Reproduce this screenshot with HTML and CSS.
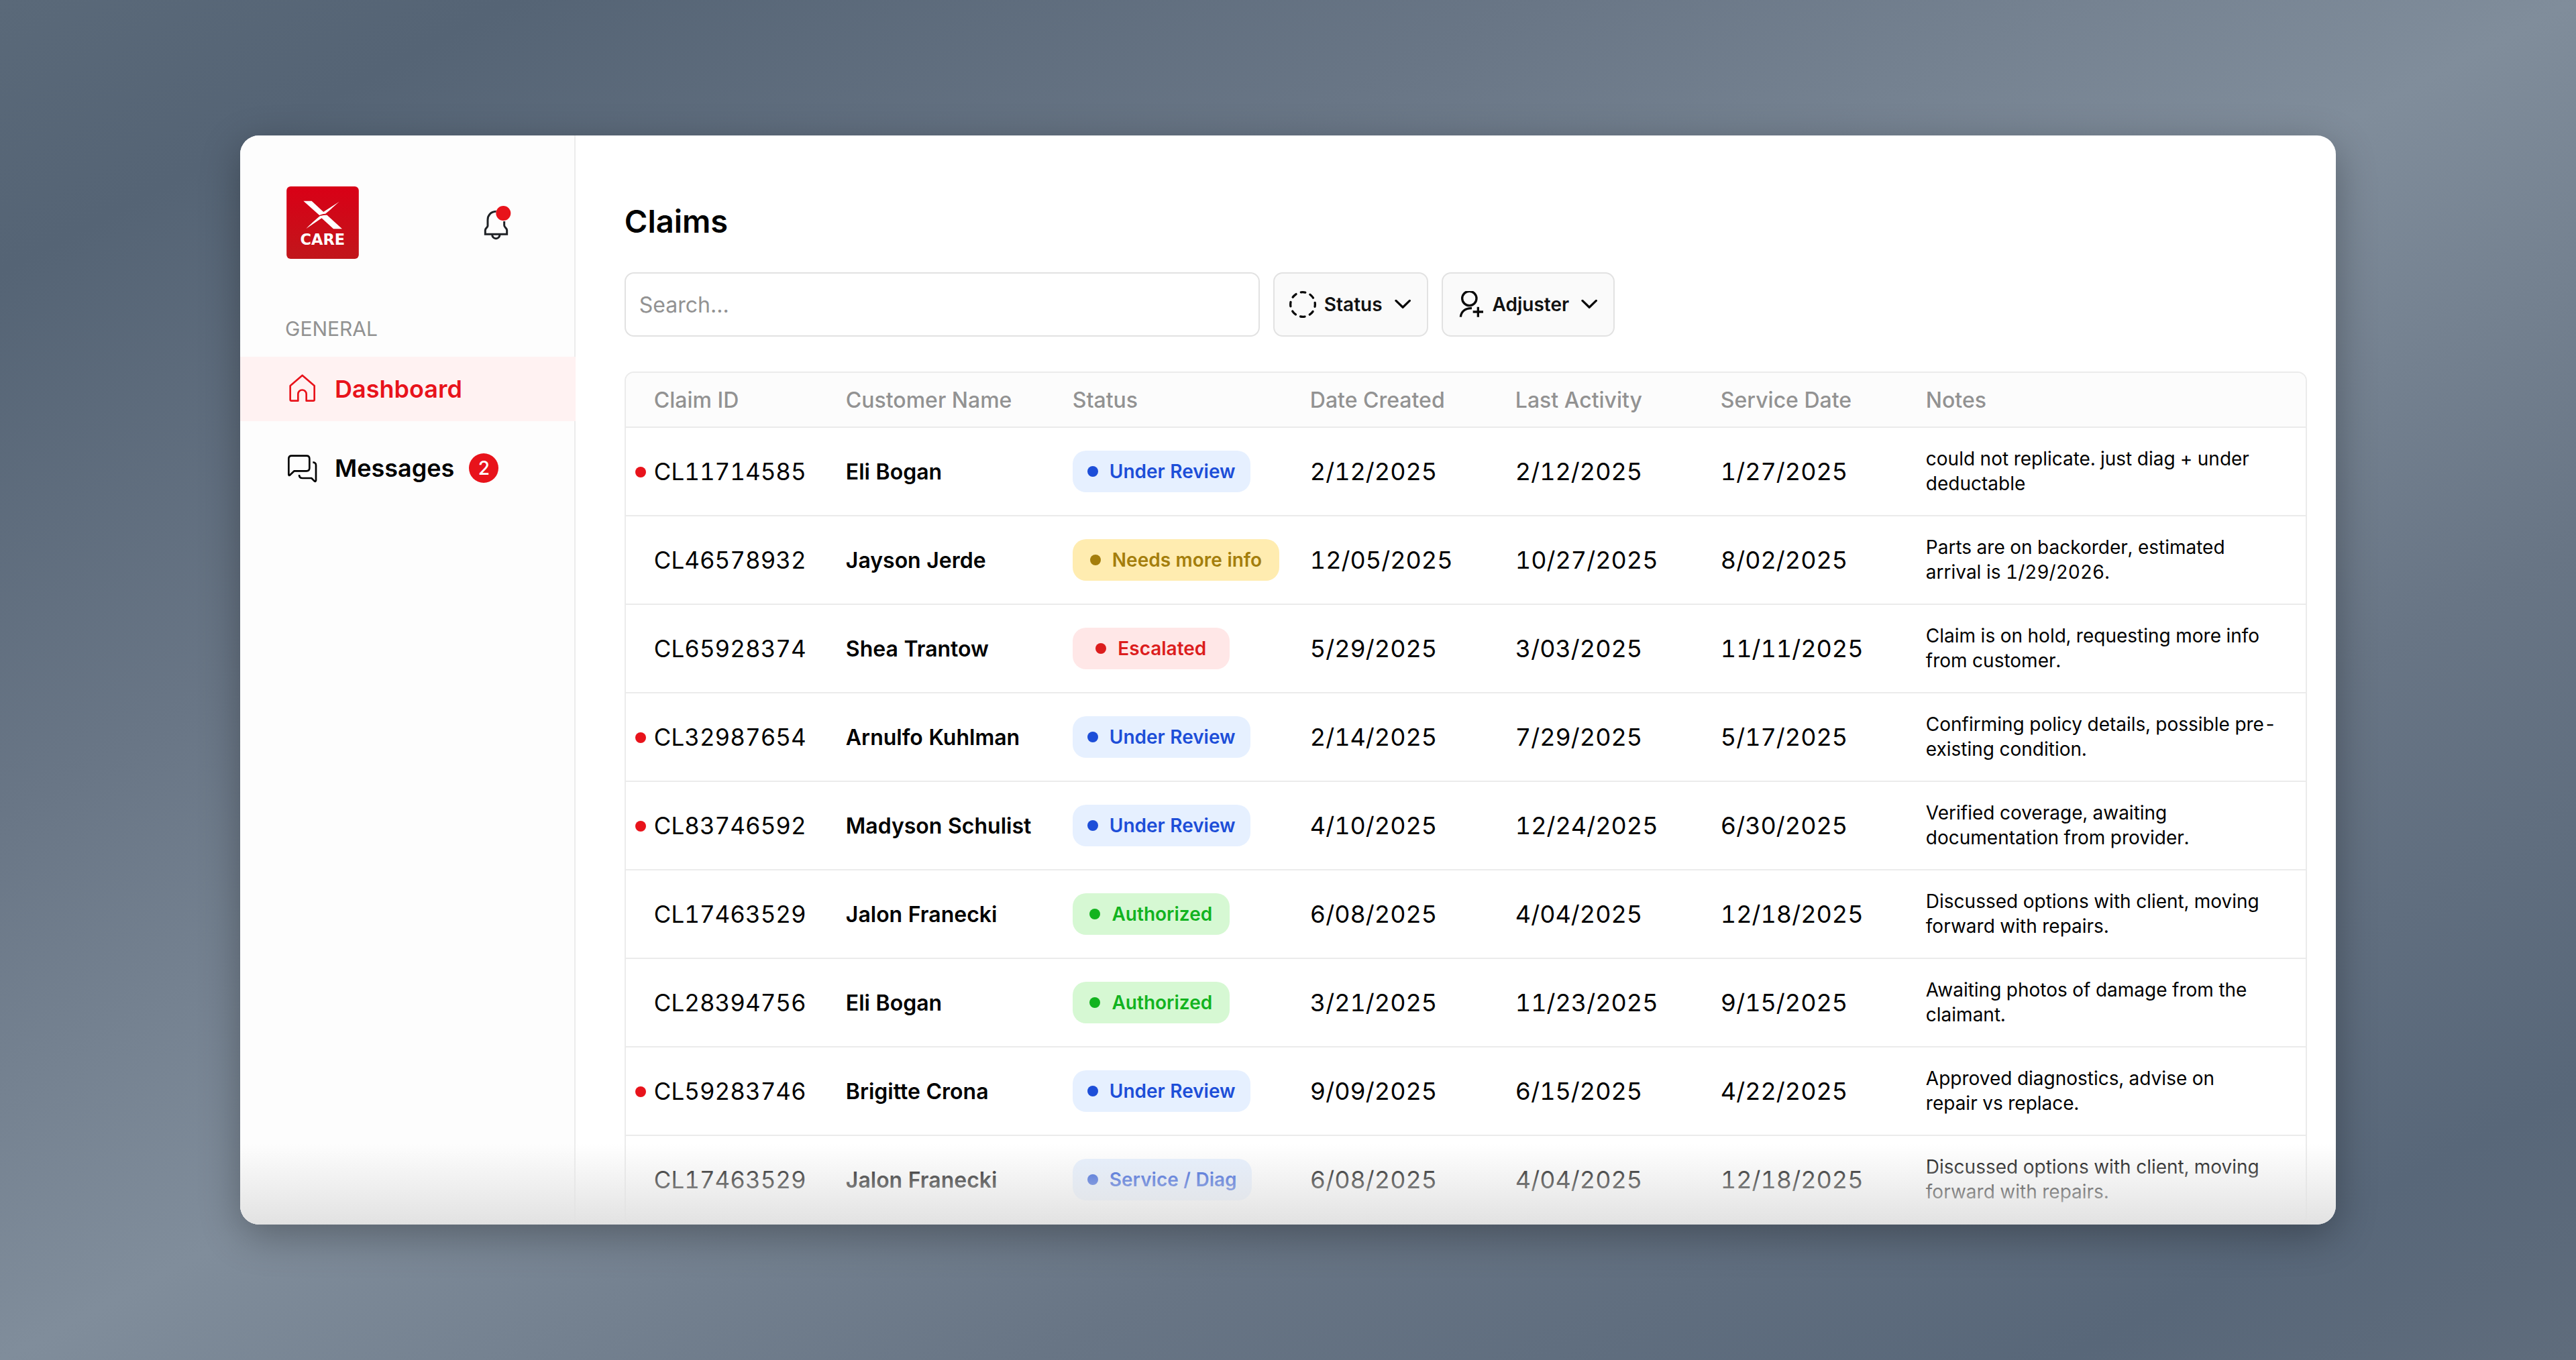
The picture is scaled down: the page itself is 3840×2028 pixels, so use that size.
FILE: index.html
```html
<!DOCTYPE html>
<html lang="en">
<head>
    <meta charset="UTF-8">
    <meta name="viewport" content="width=device-width, initial-scale=1.0">
    <title>Claims</title>
    <link rel="stylesheet" href="styles.css">
</head>
<body>

<div class="window">
    <aside class="sidebar">
        <div class="sidebar-top">
            <svg class="logo" viewBox="81 54 325 326" role="img" aria-label="X Care">
                <defs>
                    <linearGradient id="logo-bg" x1="0" y1="0" x2="0" y2="1">
                        <stop offset="0" stop-color="#d90016"/>
                        <stop offset="1" stop-color="#c1161b"/>
                    </linearGradient>
                </defs>
                <rect x="81" y="54" width="325" height="326" rx="18" fill="url(#logo-bg)"/>
                <path fill="#fff" d="M157 120H194L247 169L318 123C290 148 264 172 256 177C246 178 236 180 229 184Z"/>
                <path fill="#fff" d="M331 245H292L239 197L169 244C185 228 215 200 232 187C242 184 254 183 263 183Z"/>
                <text class="logo-text" x="243" y="317" text-anchor="middle">CARE</text>
            </svg>
            <button class="bell" type="button" aria-label="Notifications">
                <svg viewBox="84 78 144 156" fill="none" stroke="#1f2226" stroke-width="9">
                    <path d="M149 106C124 107 111 124 111 144V170C111 178 100 180 100 190V208H197V190C197 180 185 178 185 168V150"/>
                    <path d="M131 210A17 17 0 0 0 165 210"/>
                    <circle cx="181" cy="114" r="33" fill="#e8131b" stroke="none"/>
                </svg>
            </button>
        </div>

        <h2 class="nav-title">GENERAL</h2>
        <nav class="nav">
            <a class="nav-item active" href="#">
                <svg class="nav-icon" viewBox="27 54 132 132">
                    <path d="M92 59L38 106V168Q38 173 43 173H73V143A18 18 0 0 1 110 143V173H141Q146 173 146 168V106Z"/>
                </svg>
                Dashboard
            </a>
            <a class="nav-item" href="#">
                <svg class="nav-icon" viewBox="27 405 132 132">
                    <path d="M44 416H111Q124 416 124 429V471Q124 484 111 484H56L37 502Q31 506 31 499V429Q31 416 44 416Z"/>
                    <path d="M139 445Q153 446 153 458V526Q152 533 146 529L133 516H93Q78 516 78 501"/>
                </svg>
                Messages
                <span class="nav-count">2</span>
            </a>
        </nav>
    </aside>

    <main class="main">
        <h1>Claims</h1>

        <div class="filters">
            <input class="search" type="text" placeholder="Search..." aria-label="Search claims">
            <button class="filter" type="button">
                <svg class="icon-status" viewBox="95 113 120 120">
                    <circle cx="155" cy="173" r="55" stroke-dasharray="20 23.2" stroke-dashoffset="10"/>
                </svg>
                Status
                <svg class="icon-chevron" viewBox="567 150 73 48"><path d="M573 157L604 187L635 157"/></svg>
            </button>
            <button class="filter" type="button">
                <svg class="icon-adjuster" viewBox="860 113 116 120">
                    <circle cx="910" cy="146" r="32"/>
                    <path d="M871 229C873 205 892 189 921 190M949 184V229M926 206H972"/>
                </svg>
                Adjuster
                <svg class="icon-chevron" viewBox="567 150 73 48"><path d="M573 157L604 187L635 157"/></svg>
            </button>
        </div>

        <div class="table-box">
            <table class="claims">
                <thead>
                    <tr>
                        <th class="col-id">Claim ID</th>
                        <th class="col-name">Customer Name</th>
                        <th class="col-status">Status</th>
                        <th class="col-date">Date Created</th>
                        <th class="col-date">Last Activity</th>
                        <th class="col-date">Service Date</th>
                        <th>Notes</th>
                    </tr>
                </thead>
                <tbody>
                    <tr>
                        <td class="id unread">CL11714585</td>
                        <td class="name">Eli Bogan</td>
                        <td><span class="pill review">Under Review</span></td>
                        <td>2/12/2025</td>
                        <td>2/12/2025</td>
                        <td>1/27/2025</td>
                        <td class="notes">could not replicate. just diag + under deductable</td>
                    </tr>
                    <tr>
                        <td class="id">CL46578932</td>
                        <td class="name">Jayson Jerde</td>
                        <td><span class="pill info">Needs more info</span></td>
                        <td>12/05/2025</td>
                        <td>10/27/2025</td>
                        <td>8/02/2025</td>
                        <td class="notes">Parts are on backorder, estimated arrival is 1/29/2026.</td>
                    </tr>
                    <tr>
                        <td class="id">CL65928374</td>
                        <td class="name">Shea Trantow</td>
                        <td><span class="pill escalated">Escalated</span></td>
                        <td>5/29/2025</td>
                        <td>3/03/2025</td>
                        <td>11/11/2025</td>
                        <td class="notes">Claim is on hold, requesting more info from customer.</td>
                    </tr>
                    <tr>
                        <td class="id unread">CL32987654</td>
                        <td class="name">Arnulfo Kuhlman</td>
                        <td><span class="pill review">Under Review</span></td>
                        <td>2/14/2025</td>
                        <td>7/29/2025</td>
                        <td>5/17/2025</td>
                        <td class="notes">Confirming policy details, possible pre-existing condition.</td>
                    </tr>
                    <tr>
                        <td class="id unread">CL83746592</td>
                        <td class="name">Madyson Schulist</td>
                        <td><span class="pill review">Under Review</span></td>
                        <td>4/10/2025</td>
                        <td>12/24/2025</td>
                        <td>6/30/2025</td>
                        <td class="notes">Verified coverage, awaiting documentation from provider.</td>
                    </tr>
                    <tr>
                        <td class="id">CL17463529</td>
                        <td class="name">Jalon Franecki</td>
                        <td><span class="pill authorized">Authorized</span></td>
                        <td>6/08/2025</td>
                        <td>4/04/2025</td>
                        <td>12/18/2025</td>
                        <td class="notes">Discussed options with client, moving forward with repairs.</td>
                    </tr>
                    <tr>
                        <td class="id">CL28394756</td>
                        <td class="name">Eli Bogan</td>
                        <td><span class="pill authorized">Authorized</span></td>
                        <td>3/21/2025</td>
                        <td>11/23/2025</td>
                        <td>9/15/2025</td>
                        <td class="notes">Awaiting photos of damage from the claimant.</td>
                    </tr>
                    <tr>
                        <td class="id unread">CL59283746</td>
                        <td class="name">Brigitte Crona</td>
                        <td><span class="pill review">Under Review</span></td>
                        <td>9/09/2025</td>
                        <td>6/15/2025</td>
                        <td>4/22/2025</td>
                        <td class="notes">Approved diagnostics, advise on repair&nbsp;vs replace.</td>
                    </tr>
                    <tr>
                        <td class="id">CL17463529</td>
                        <td class="name">Jalon Franecki</td>
                        <td><span class="pill review">Service / Diag</span></td>
                        <td>6/08/2025</td>
                        <td>4/04/2025</td>
                        <td>12/18/2025</td>
                        <td class="notes">Discussed options with client, moving forward with repairs.</td>
                    </tr>
                </tbody>
            </table>
        </div>
    </main>
</div>

</body>
</html>
```
FILE: styles.css
```css
* {
    box-sizing: border-box;
}

body {
    margin: 0;
    padding: 202px 358px;
    height: 100vh;
    font-family: Inter, sans-serif;
    color: #000;
    background: linear-gradient(to bottom right, #5a6979, #556475 10%, #697686 30%, #808d9b 50%, #687585 70%, #586779 90%, #5f6c7c);
    overflow: hidden;
}

h1, h2 {
    margin: 0;
}

button {
    font-family: inherit;
    cursor: pointer;
}

.window {
    position: relative;
    display: flex;
    height: 100%;
    background-color: #fff;
    border-radius: 28px;
    box-shadow: 0 16px 60px rgba(0, 0, 0, 0.3);
    overflow: hidden;
}

/* Fade over the bottom of the list */
.window::after {
    content: "";
    position: absolute;
    left: 0;
    right: 0;
    bottom: 0;
    height: 120px;
    background: linear-gradient(rgba(255, 255, 255, 0), #e2e2e2);
    pointer-events: none;
}

/* Sidebar */
.sidebar {
    flex: 0 0 16%;
    padding-top: 76px;
    background-color: #fdfdfd;
    border-right: 2px solid #ececec;
}

.sidebar-top {
    display: flex;
    align-items: center;
    justify-content: space-between;
    padding: 0 90px 0 69px;
}

.logo {
    width: 108px;
    height: 108px;
}

.logo-text {
    font-family: "DejaVu Sans", sans-serif;
    font-size: 68px;
    font-weight: bold;
    fill: #fff;
}

.bell {
    width: 48px;
    height: 52px;
    padding: 0;
    border: none;
    background: none;
}

.bell svg {
    display: block;
    width: 100%;
    height: 100%;
}

.nav-title {
    margin: 84px 0 22px;
    padding-left: 67px;
    font-size: 30px;
    line-height: 40px;
    font-weight: 400;
    color: #929292;
}

.nav {
    display: flex;
    flex-direction: column;
    gap: 22px;
}

.nav-item {
    display: flex;
    align-items: center;
    height: 96px;
    padding-left: 71px;
    font-size: 36px;
    font-weight: 600;
    color: #000;
    text-decoration: none;
}

.nav-item.active {
    margin-right: -2px;
    color: #e8131b;
    background-color: #fff2f2;
}

.nav-icon {
    width: 44px;
    height: 44px;
    margin-right: 26px;
    fill: none;
    stroke: currentColor;
    stroke-width: 8;
    stroke-linejoin: round;
    overflow: visible;
}

.nav-count {
    width: 44px;
    margin-left: 22px;
    border-radius: 50%;
    font-size: 28px;
    line-height: 44px;
    font-weight: 500;
    text-align: center;
    color: #fff;
    background-color: #e8131b;
}

/* Main */
.main {
    flex: 1;
    padding: 96px 43px 0 73px;
}

h1 {
    font-size: 47px;
    line-height: 64px;
    font-weight: 600;
}

.filters {
    display: flex;
    gap: 20px;
    margin: 44px 0 52px;
}

.search {
    width: 947px;
    height: 96px;
    padding: 0 20px;
    border: 2px solid #e2e2e2;
    border-radius: 14px;
    font-family: inherit;
    font-size: 32px;
    background-color: #fff;
}

.search::placeholder {
    color: #929292;
}

.filter {
    display: flex;
    align-items: center;
    height: 96px;
    padding: 0 24px 0 22px;
    border: 2px solid #e2e2e2;
    border-radius: 14px;
    font-size: 28px;
    font-weight: 600;
    color: #111;
    background-color: #fafafa;
}

.filter svg {
    fill: none;
    stroke: #0a0a0a;
    stroke-width: 10;
}

.icon-status {
    width: 40px;
    height: 40px;
    margin-right: 12px;
    stroke-linecap: round;
}

.icon-adjuster {
    width: 40px;
    height: 40px;
    margin-right: 12px;
}

.icon-chevron {
    width: 24px;
    height: 16px;
    margin-left: 18px;
    stroke-linecap: round;
    stroke-linejoin: round;
}

/* Table */
.table-box {
    border: 2px solid #ebebeb;
    border-radius: 14px;
    overflow: hidden;
}

.claims {
    width: 100%;
    table-layout: fixed;
    border-collapse: separate;
    border-spacing: 0;
}

.col-id {
    width: 328px;
}

.col-name {
    width: 338px;
}

.col-status {
    width: 354px;
}

.col-date {
    width: 306px;
}

.claims th {
    height: 82px;
    padding: 0;
    border-bottom: 2px solid #ebebeb;
    font-size: 32px;
    font-weight: 500;
    text-align: left;
    color: #929292;
    background-color: #fcfcfc;
}

.claims td {
    height: 132px;
    padding: 0;
    border-bottom: 2px solid #ebebeb;
    font-size: 36px;
    font-variant-numeric: tabular-nums;
}

.claims .col-id,
.claims .id {
    padding-left: 42px;
}

.claims .id {
    position: relative;
    font-size: 35px;
}

.unread::before {
    content: "";
    position: absolute;
    top: 58px;
    left: 14px;
    width: 16px;
    height: 16px;
    border-radius: 50%;
    background-color: #e8131b;
}

.claims .name {
    font-size: 32px;
    font-weight: 600;
}

.claims .notes {
    padding-right: 42px;
    font-size: 28px;
    line-height: 37px;
}

/* Status pills */
.pill {
    display: inline-flex;
    align-items: center;
    justify-content: center;
    gap: 17px;
    min-width: 234px;
    height: 62px;
    padding: 0 22px;
    border-radius: 20px;
    font-size: 28px;
    font-weight: 600;
    vertical-align: middle;
}

.pill::before {
    content: "";
    width: 16px;
    height: 16px;
    border-radius: 50%;
    background-color: currentColor;
}

.review {
    color: #1d4ed8;
    background-color: #e6f0ff;
}

.info {
    padding: 0 26px;
    color: #a47e0c;
    background-color: #ffecb0;
}

.escalated {
    color: #dc1d1d;
    background-color: #ffe7e7;
}

.authorized {
    color: #12b31f;
    background-color: #d6f8d3;
}
```
